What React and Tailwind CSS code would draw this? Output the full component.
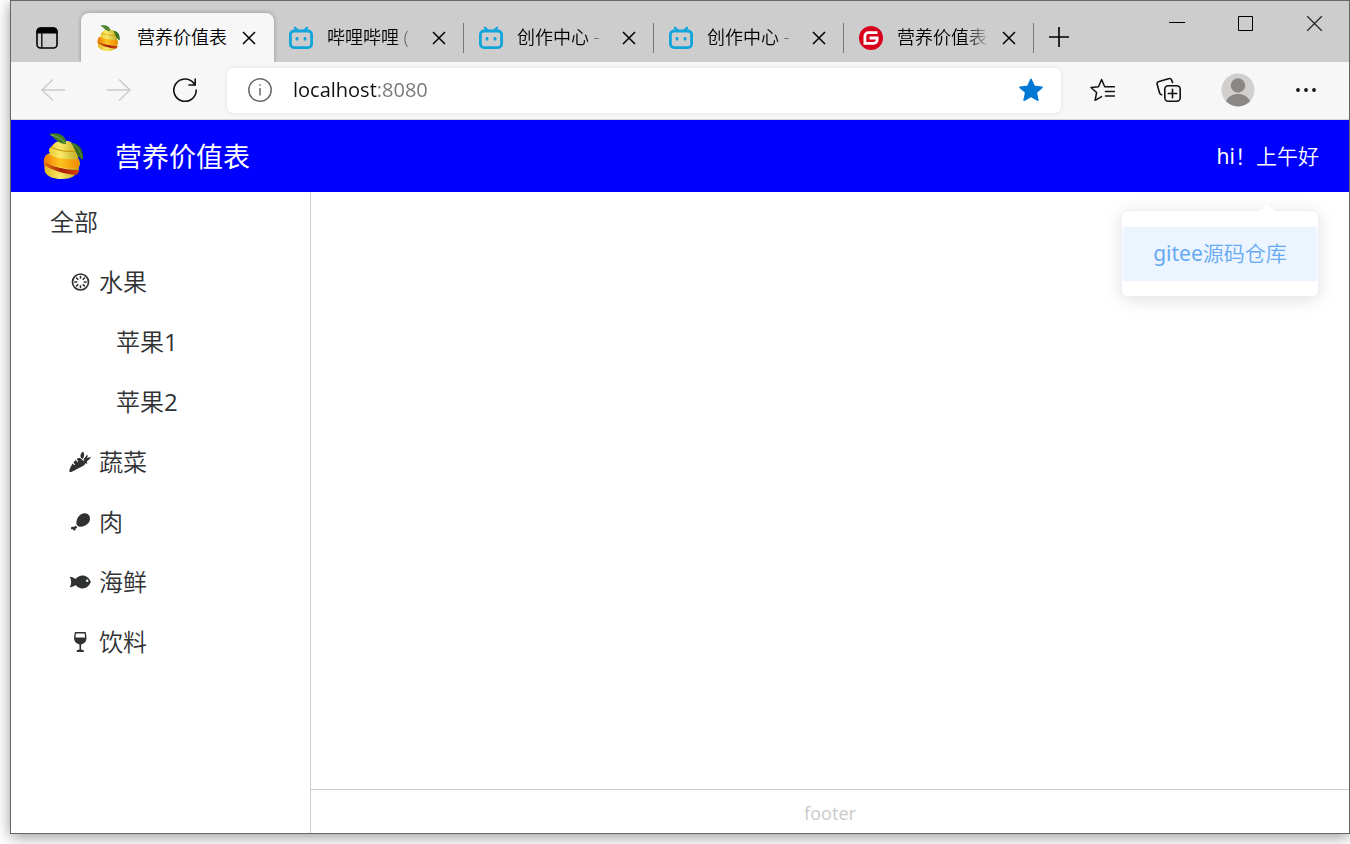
import React from "react";

const FONT = "font-['Open_Sans','Noto_Sans_CJK_SC',sans-serif]";

function FruitLogo({ className }) {
  return (
    <svg viewBox="0 0 42 46" className={className} aria-hidden="true">
      <defs>
        <linearGradient id="peel" x1="0" x2="1">
          <stop offset="0" stopColor="#e0b81c" />
          <stop offset=".45" stopColor="#fbe96a" />
          <stop offset="1" stopColor="#b9a61a" />
        </linearGradient>
        <linearGradient id="orange" x1="0" x2="1">
          <stop offset="0" stopColor="#f07a00" />
          <stop offset=".45" stopColor="#ffc21f" />
          <stop offset="1" stopColor="#f08a00" />
        </linearGradient>
        <linearGradient id="red" x1="0" x2="1">
          <stop offset="0" stopColor="#e8730c" />
          <stop offset=".5" stopColor="#a8200a" />
          <stop offset="1" stopColor="#d8430c" />
        </linearGradient>
      </defs>
      <path d="M9 13c-3 2-4 5-2 7-4 2-7 6-6 11 1 2 0 5 1 8 3 5 9 7 16 7 6 0 11-1 14-4 3-2 4-5 4-8 2-3 1-6-1-9 1-3 0-6-1-7 1-4-1-7-5-8-6-4-16-3-20 3z" fill="url(#peel)" />
      <path d="M1 28c8 6 22 9 35 9 0 2-1 4-3 5C21 41 8 37 1 32z" fill="url(#red)" />
      <path d="M5 21c-3 1-4 4-4 7 9 6 25 9 34 7 2-3 1-6 0-9C27 27 13 26 5 21z" fill="url(#orange)" />
      <path d="M8 14c7 4 17 5 26 4" fill="none" stroke="#c58b00" strokeWidth="1" />
      <path d="M6 1c7-2 18 0 17 10C15 11 12 5 6 1z" fill="#3d7a26" />
      <path d="M8 2c6 1 11 4 14 8" fill="none" stroke="#8bb34d" strokeWidth="1" />
      <path d="M28 10c7 0 13 5 12 17-7-3-7-11-12-17z" fill="#31661f" />
      <path d="M30 11c5 3 7 8 9 14" fill="none" stroke="#75a23d" strokeWidth=".8" />
    </svg>
  );
}

function BiliIcon() {
  return (
    <svg viewBox="0 0 24 24" className="size-6 shrink-0" fill="none" stroke="#12a5dc" strokeLinecap="round" aria-hidden="true">
      <path d="M6 1.800 8.800 4.500M18 1.800 15.200 4.500" strokeWidth="2.4" />
      <rect x="1.4" y="5" width="21.2" height="16.600" rx="3.6" strokeWidth="2.8" />
      <path d="M8 12.500v.8M16 12.500v.8" strokeWidth="2.800" />
    </svg>
  );
}

function GiteeIcon() {
  return (
    <svg viewBox="0 0 24 24" className="size-6 shrink-0" aria-hidden="true">
      <circle cx="12" cy="12" r="12" fill="#d8001b" />
      <path d="M18.500 6.700H9.300A3.400 3.400 0 0 0 5.900 10.100V17.300h9a3.200 3.200 0 0 0 3.200-3.200v-2.100h-7.600" fill="none" stroke="#fff" strokeWidth="2.800" />
    </svg>
  );
}

function Cross({ className, w }) {
  return (
    <svg viewBox="0 0 14 14" className={className} fill="none" stroke="currentColor" strokeWidth={w} aria-hidden="true">
      <path d="M1 1 13 13M13 1 1 13" />
    </svg>
  );
}

const fadeTabs = [
  { title: "哔哩哔哩 (", icon: <BiliIcon /> },
  { title: "创作中心 -", icon: <BiliIcon /> },
  { title: "创作中心 -", icon: <BiliIcon /> },
  { title: "营养价值表", icon: <GiteeIcon /> },
];

function TabStrip() {
  return (
    <div className="flex h-[61px] items-stretch bg-[#cdcdcd] text-[18px] text-black">
      <button aria-label="标签操作" className="flex w-[70px] shrink-0 items-center justify-center pt-3 pl-0.5">
        <svg viewBox="0 0 22 22" className="size-[22px]" fill="none" stroke="#000" aria-hidden="true">
          <rect x="1" y="1" width="20" height="20" rx="3.5" strokeWidth="1.6" />
          <path d="M1 6V4a3 3 0 0 1 3-3h14a3 3 0 0 1 3 3v2z" fill="#000" />
          <path d="M5.8 6v15" strokeWidth="1.3" />
        </svg>
      </button>
      <div className="mt-3 flex w-[193px] items-center rounded-t-lg bg-[#f7f7f7] pr-[18px] pl-4 shadow-[0_0_4px_#0000004d] [clip-path:inset(-4px_-4px_0_-4px)]">
        <FruitLogo className="h-[26px] w-6 shrink-0" />
        <span className="ml-4 min-w-0 flex-1 font-[350] whitespace-nowrap">营养价值表</span>
        <button aria-label="关闭标签页">
          <Cross className="size-[14px]" w="1.5" />
        </button>
      </div>
      {fadeTabs.map((t, i) => (
        <div key={i} className="flex w-[190px] min-w-0 items-center pt-3 pl-[15px]">
          {t.icon}
          <span className="ml-[14px] w-[90px] font-[350] whitespace-nowrap [mask-image:linear-gradient(90deg,#000_68px,transparent_94px)]">
            {t.title}
          </span>
          <button aria-label="关闭标签页" className="ml-auto">
            <Cross className="size-[14px]" w="1.5" />
          </button>
          <span className="ml-[17px] h-[30px] w-px shrink-0 bg-[#777]" />
        </div>
      ))}
      <button aria-label="新建标签页" className="ml-[14px] pt-[10px]">
        <svg viewBox="0 0 22 22" className="size-[22px]" stroke="#000" strokeWidth="1.6" aria-hidden="true">
          <path d="M11 1v20M1 11h20" />
        </svg>
      </button>
      <div className="ml-auto flex h-11 items-center">
        <button aria-label="最小化" className="flex w-[69px] justify-center">
          <svg viewBox="0 0 16 16" className="size-4" stroke="#000" aria-hidden="true">
            <path d="M0 7.5h16" />
          </svg>
        </button>
        <button aria-label="最大化" className="flex w-[69px] justify-center">
          <svg viewBox="0 0 15 15" className="size-[15px]" fill="none" stroke="#000" aria-hidden="true">
            <path d="M.5.5h14v14H.5z" />
          </svg>
        </button>
        <button aria-label="关闭" className="flex w-[69px] justify-center text-[#222]">
          <Cross className="size-[17px]" w="1" />
        </button>
      </div>
    </div>
  );
}

function Toolbar() {
  return (
    <div className="flex h-[58px] items-center border-b border-[#d6d6d6] bg-[#f7f7f7] pb-px">
      <div className="flex w-[216px] shrink-0 items-center gap-[42px] pl-[30px]">
        <button aria-label="后退">
          <svg viewBox="0 0 24 24" className="size-6" fill="none" stroke="#cbcbcb" strokeWidth="1.4" aria-hidden="true">
            <path d="M24 12H1M12 1.5 1 12l11 10.5" />
          </svg>
        </button>
        <button aria-label="前进">
          <svg viewBox="0 0 24 24" className="size-6" fill="none" stroke="#cbcbcb" strokeWidth="1.4" aria-hidden="true">
            <path d="M0 12h23M12 1.5 23 12 12 22.5" />
          </svg>
        </button>
        <button aria-label="刷新">
          <svg viewBox="0 0 24 24" className="size-6" fill="none" stroke="#111" strokeWidth="1.6" aria-hidden="true">
            <path d="M23.200 11.500A11.200 11.200 0 1 1 20.800 5.200L22.200 7M22.200.5V7h-6.800" />
          </svg>
        </button>
      </div>
      <div className="flex h-[45px] min-w-0 flex-1 items-center rounded-md bg-white pr-[18px] pl-[21px] shadow-[0_0_4px_#0000001a]">
        <svg viewBox="0 0 24 24" className="size-6 shrink-0" fill="none" stroke="#6a6a6a" strokeWidth="1.5" aria-hidden="true">
          <circle cx="12" cy="12" r="11.2" />
          <path d="M12 10v7.5" />
          <circle cx="12" cy="7" r=".6" fill="#6a6a6a" strokeWidth=".6" />
        </svg>
        <input
          aria-label="地址栏"
          defaultValue="localhost:8080"
          className="ml-[21px] min-w-0 flex-1 bg-[linear-gradient(90deg,#111_84px,#767676_84px)] bg-clip-text font-['Open_Sans',sans-serif] text-[20px] text-transparent outline-none"
        />
        <button aria-label="收藏此页">
          <svg viewBox="0 0 24 24" className="size-6" fill="#0078d4" stroke="#0078d4" strokeWidth="1.6" strokeLinejoin="round" aria-hidden="true">
            <path d="m12 1.400 3.200 7 7.800.9-5.800 5.200 1.700 7.700L12 18.400l-6.900 3.800 1.700-7.700L1 9.300l7.800-.9z" />
          </svg>
        </button>
      </div>
      <div className="flex shrink-0 items-center pr-8 pl-[29px]">
        <button aria-label="收藏夹">
          <svg viewBox="0 0 26 24" className="h-6 w-[26px]" fill="none" stroke="#111" strokeWidth="1.5" strokeLinecap="round" strokeLinejoin="round" aria-hidden="true">
            <path d="M14.700 8.700 11.600 1.500 8.500 8.700 1 9.500l5.600 5-1.500 7.800 6.500-3.700M14.700 8.700h9.700M15.500 13.400h8.900M15.500 18.100h8.900" />
          </svg>
        </button>
        <button aria-label="集锦" className="ml-10">
          <svg viewBox="0 0 26 26" className="size-[26px]" fill="none" stroke="#111" strokeWidth="1.6" strokeLinecap="round" aria-hidden="true">
            <rect x="8.800" y="8.800" width="15.400" height="15.400" rx="3.4" />
            <path d="M16.500 12.300v8.400M12.300 16.500h8.400M16.500 5.400l-.8-2.100A2.600 2.600 0 0 0 12.500 1.700L3 4.400A2.600 2.600 0 0 0 1.200 7.600l2.400 8.400a2.600 2.600 0 0 0 2 1.800" />
          </svg>
        </button>
        <button aria-label="个人资料" className="ml-[39px]">
          <svg viewBox="0 0 34 34" className="size-[34px]" aria-hidden="true">
            <circle cx="17" cy="17" r="16.6" fill="#d2d0ce" />
            <circle cx="17" cy="12.5" r="7.2" fill="#8a8886" />
            <path d="M5 28.200C7 23.500 12 21 17 21s10 2.500 12 7.200a16.400 16.400 0 0 1-24 0z" fill="#8a8886" />
          </svg>
        </button>
        <button aria-label="设置及其他" className="ml-10">
          <svg viewBox="0 0 22 22" className="size-[22px]" fill="#111" aria-hidden="true">
            <circle cx="3" cy="11" r="1.900" />
            <circle cx="11" cy="11" r="1.900" />
            <circle cx="19" cy="11" r="1.900" />
          </svg>
        </button>
      </div>
    </div>
  );
}

const glyphs = {
  fruit: (
    <g fill="none" stroke="#303133">
      <circle cx="11.500" cy="11" r="8" strokeWidth="1.7" />
      <path
        d="M11.500 4.800v3M11.500 14.200v3M5.300 11h3M14.700 11h3M7.100 6.600l2.200 2.200M13.700 13.200l2.200 2.200M15.900 6.600l-2.200 2.200M9.300 13.200l-2.200 2.200"
        strokeWidth="1.5"
      />
    </g>
  ),
  carrot: (
    <g fill="#303133">
      <path d="M.3 20c.5-3 2-5.200 3.300-7.400l1.700 1.700.8-.7-1.700-2c.7-1.200 1.400-2 2.200-2.700l1.900 2 .8-.7-1.700-2.200c1.300-1 2.500-1.300 3.900-.8l4.800 4.600c0 1.800-1.500 2.800-3.200 3.600-3.700 1.500-7.100 4.100-11 5.600-1.200.3-1.900 0-1.800-1z" />
      <path d="M12 6.800c-1.300-2.500-.3-4.400 2-6.400 1.300 1.600 1.500 3.300.8 5.300l-1 2.200zM14.700 8.200l3.500-4.600c.5 1 .5 2-.1 3.300l3.900-1.100c-.8 1.900-2 3.200-3.500 4.100l-.9.400.9 2.100c-1.800.6-3-.8-3.800-2z" />
    </g>
  ),
  drumstick: (
    <g fill="#303133">
      <path d="M18.600 2.900c3 2 3.200 6.200.8 9.200-2.300 2.900-6.700 4.400-9.800 3.500l-2.100-1.900C6.900 10.400 8.100 6.400 11 4c2.300-1.900 5.400-2.500 7.600-1.100z" />
      <path d="M6.700 14.800l1.700 1.500-1.700 1.200c.2 1.200-.4 2-1.200 2.100-.8 0-1.200-.5-1.400-1.300-1 .2-1.900-.1-2.100-.9-.2-1 .6-1.700 1.800-1.500 1.100.1 2-.3 2.900-1.100z" />
    </g>
  ),
  fish: (
    <path
      fill="#303133"
      fillRule="evenodd"
      d="M.8 5.700c2.200.2 4.100 1 5.700 2.300C8.300 5.800 11 4.600 13.600 4.600c3.600 0 6.600 2.400 8.200 6.400-1.600 4-4.600 6.400-8.200 6.400-2.600 0-5.300-1.200-7.100-3.400-1.600 1.300-3.500 2.100-5.700 2.300.9-1.800 1.400-3.500 1.400-5.300S1.700 7.500.8 5.700zM18.200 8.600a1.200 1.200 0 1 0 0 2.400 1.200 1.200 0 0 0 0-2.400z"
    />
  ),
  glass: (
    <path
      fill="#303133"
      fillRule="evenodd"
      d="M6 1h10.600c.9 3.500 1.200 6.300.6 8.300-.8 2.300-2.500 3.700-5.100 4.100v5.200l2.700.6V21H7.800v-1.800l2.700-.6v-5.200c-2.600-.4-4.300-1.800-5.100-4.100C4.800 7.300 5.100 4.500 6 1zM7.100 2.500c-.4 1.500-.6 2.800-.5 4H16c.1-1.200-.1-2.500-.5-4z"
    />
  ),
};

const foods = [
  {
    icon: "fruit",
    label: "水果",
    children: [
      { name: "苹果", no: 1 },
      { name: "苹果", no: 2 },
    ],
  },
  { icon: "carrot", label: "蔬菜" },
  { icon: "drumstick", label: "肉" },
  { icon: "fish", label: "海鲜" },
  { icon: "glass", label: "饮料" },
];

function Sidebar() {
  return (
    <nav aria-label="分类" className="w-[300px] shrink-0 border-r border-[#ccc] text-[24px] font-[350] text-[#303133]">
      <a href="#all" className="flex h-[60px] items-center pl-[39px]">全部</a>
      <ul>
        {foods.map((f) => (
          <li key={f.label}>
            <a href={"#" + f.icon} className="flex h-[60px] items-center gap-2 pl-[58px]">
              <svg viewBox="0 0 22 22" className="size-[22px] shrink-0" aria-hidden="true">
                {glyphs[f.icon]}
              </svg>
              {f.label}
            </a>
            {f.children && (
              <ul>
                {f.children.map((c) => (
                  <li key={c.no}>
                    <a href={"#apple-" + c.no} className="flex h-[60px] items-center pl-[105px]">
                      {c.name}
                      <span className="font-normal">{c.no}</span>
                    </a>
                  </li>
                ))}
              </ul>
            )}
          </li>
        ))}
      </ul>
    </nav>
  );
}

function UserMenu() {
  return (
    <div className="relative font-['Noto_Sans','Noto_Sans_CJK_SC',sans-serif] text-[21px]">
      <button aria-haspopup="menu" aria-expanded="true" className="block font-[350] text-white">
        <span className="font-normal">hi</span>！上午好
      </button>
      <div className="absolute top-full right-0 z-10 mt-[37px] rounded-md border border-[#ebeef5] bg-white px-px pt-4 pb-[15px] font-[350] shadow-[0_3px_18px_#0000001f]">
        <svg viewBox="0 0 18 8" className="absolute -top-[7px] right-[42px] h-2 w-[18px]" aria-hidden="true">
          <path d="M0 8 9 0l9 8z" fill="#fff" />
        </svg>
        <a href="#gitee" className="flex h-[54px] w-[194px] items-center justify-center bg-[#ecf5ff] whitespace-nowrap text-[#66a9f5]">
          <span className="font-normal">gitee</span>源码仓库
        </a>
      </div>
    </div>
  );
}

export default function App() {
  return (
    <div className={"flex min-h-screen flex-col bg-white pb-[10px] pl-[10px] " + FONT}>
      <div className="flex flex-1 flex-col border border-[#666] bg-white shadow-[0_3px_14px_#00000066]">
        <TabStrip />
        <Toolbar />
        <header className="flex h-[72px] items-center bg-[#0000ff] pr-[30px] pl-8 text-white">
          <FruitLogo className="h-[46px] w-[42px]" />
          <div className="flex flex-1 items-center justify-between pt-0.5 pl-[30px]">
            <h1 className="text-[27px]">营养价值表</h1>
            <UserMenu />
          </div>
        </header>
        <div className="flex flex-1">
          <Sidebar />
          <div className="flex min-w-0 flex-1 flex-col">
            <main className="flex-1" />
            <footer className="flex h-11 items-center justify-center border-t border-[#ccc] pt-1 font-['Noto_Sans',sans-serif] text-[18px] text-[#ccc]">
              footer
            </footer>
          </div>
        </div>
      </div>
    </div>
  );
}
